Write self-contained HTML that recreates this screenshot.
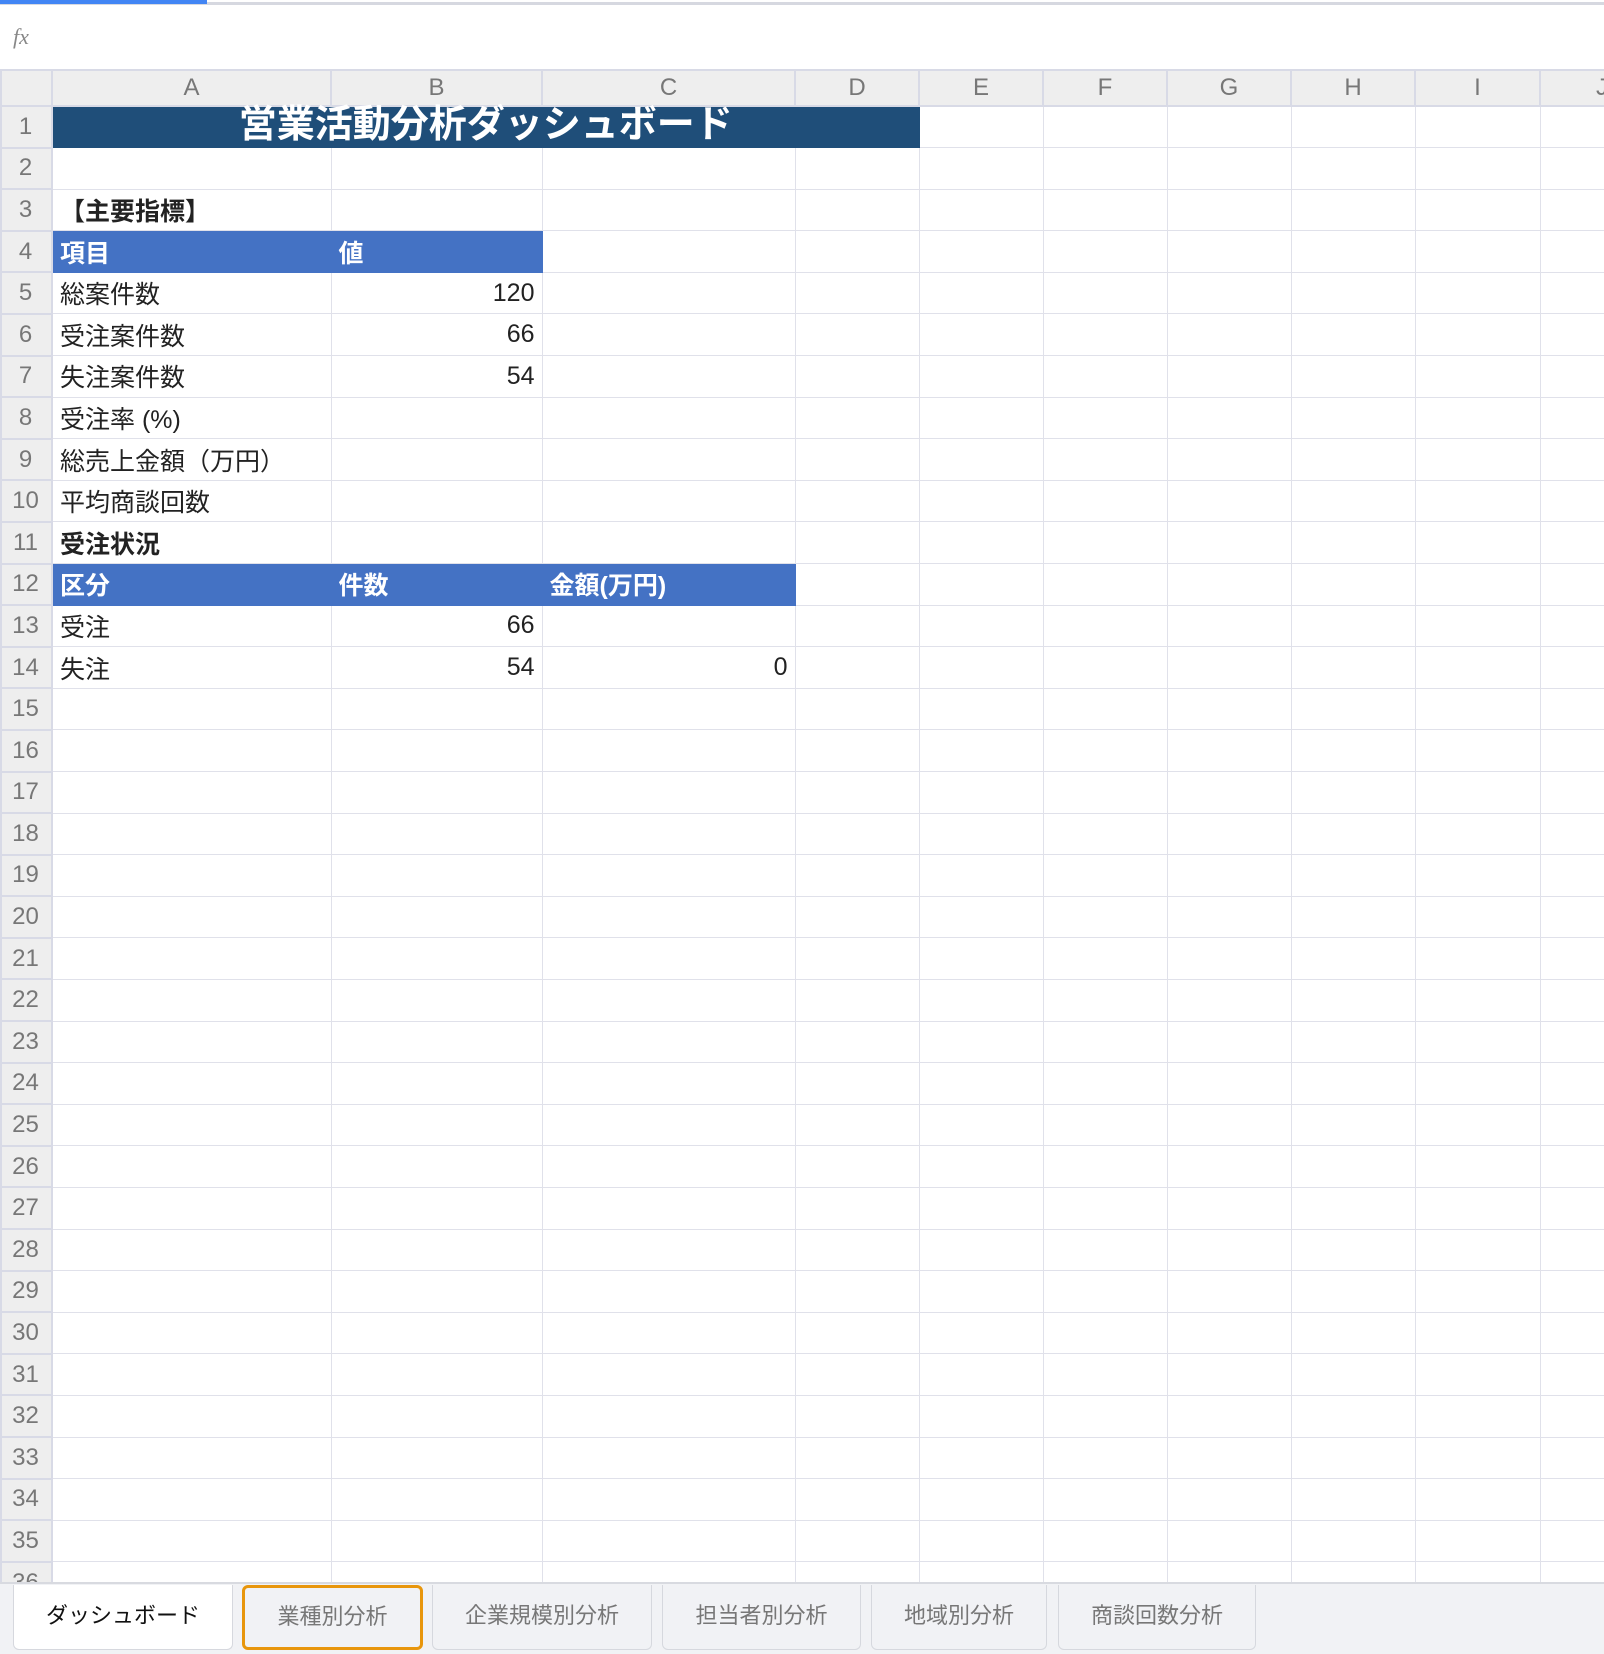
<!DOCTYPE html>
<html><head><meta charset="utf-8"><style>
*{margin:0;padding:0;box-sizing:border-box}
body{width:1604px;height:1654px;overflow:hidden;background:#fff;font-family:"Liberation Sans","Noto Sans CJK JP",sans-serif;position:relative}
.topbar{position:absolute;left:0;top:2px;width:1604px;height:3px;background:#d6d8e0}
.topblue{position:absolute;left:0;top:0;width:207px;height:4px;background:#4285f4}
.fx{position:absolute;left:13px;top:24px;font-family:"Liberation Serif",serif;font-style:italic;font-size:22px;color:#888}
.wrap{position:absolute;left:0;top:69px;width:1604px;height:1513px;overflow:hidden}
.grid{border-collapse:collapse;table-layout:fixed;width:1663px}
.grid td{border:1px solid #e0e1ea;height:41.6px;font-size:25px;color:#222;padding:0 7px;white-space:nowrap;overflow:visible}
.grid tr.h td{height:36px;background:#eeeeee;color:#777;text-align:center;border:2px solid #d8dae6;font-size:24px}
.grid td.rh{background:#eeeeee;color:#777;text-align:center;border:2px solid #d8dae6;border-top:1px solid #d8dae6;padding:0 2px 0 0;font-size:24px}
.r{text-align:right}
.b{font-weight:bold}
.hd{background:#4472c4;color:#fff!important;font-weight:bold;border-color:#4472c4!important}
.title{background:#1f4e79;color:#fff!important;font-size:38px!important;font-weight:bold;text-align:center;border-color:#1f4e79!important;line-height:36px;vertical-align:top;padding-top:0!important}
.tabs{position:absolute;left:0;top:1582px;width:1604px;height:72px;background:#f1f2f5;border-top:2px solid #d8dae0}
.tab{position:absolute;top:1px;height:65px;background:#f1f2f5;border:1px solid #d6d8de;border-top:none;border-radius:0 0 6px 6px;font-size:22px;color:#777;text-align:center;line-height:62px}
</style></head><body>
<div class="topbar"></div><div class="topblue"></div>
<div class="fx">fx</div>
<div class="wrap">
<table class="grid">
<colgroup><col style="width:51px"><col style="width:279px"><col style="width:211px"><col style="width:253px"><col style="width:124px"><col style="width:124px"><col style="width:124px"><col style="width:124px"><col style="width:124px"><col style="width:125px"><col style="width:124px"></colgroup>
<tr class="h"><td></td><td>A</td><td>B</td><td>C</td><td>D</td><td>E</td><td>F</td><td>G</td><td>H</td><td>I</td><td>J</td></tr>
<tr><td class="rh">1</td><td colspan="4" class="title">営業活動分析ダッシュボード</td><td></td><td></td><td></td><td></td><td></td><td></td></tr>
<tr><td class="rh">2</td><td></td><td></td><td></td><td></td><td></td><td></td><td></td><td></td><td></td><td></td></tr>
<tr><td class="rh">3</td><td class="b">【主要指標】</td><td></td><td></td><td></td><td></td><td></td><td></td><td></td><td></td><td></td></tr>
<tr><td class="rh">4</td><td class="hd">項目</td><td class="hd">値</td><td></td><td></td><td></td><td></td><td></td><td></td><td></td><td></td></tr>
<tr><td class="rh">5</td><td>総案件数</td><td class="r">120</td><td></td><td></td><td></td><td></td><td></td><td></td><td></td><td></td></tr>
<tr><td class="rh">6</td><td>受注案件数</td><td class="r">66</td><td></td><td></td><td></td><td></td><td></td><td></td><td></td><td></td></tr>
<tr><td class="rh">7</td><td>失注案件数</td><td class="r">54</td><td></td><td></td><td></td><td></td><td></td><td></td><td></td><td></td></tr>
<tr><td class="rh">8</td><td>受注率 (%)</td><td></td><td></td><td></td><td></td><td></td><td></td><td></td><td></td><td></td></tr>
<tr><td class="rh">9</td><td>総売上金額（万円）</td><td></td><td></td><td></td><td></td><td></td><td></td><td></td><td></td><td></td></tr>
<tr><td class="rh">10</td><td>平均商談回数</td><td></td><td></td><td></td><td></td><td></td><td></td><td></td><td></td><td></td></tr>
<tr><td class="rh">11</td><td class="b">受注状況</td><td></td><td></td><td></td><td></td><td></td><td></td><td></td><td></td><td></td></tr>
<tr><td class="rh">12</td><td class="hd">区分</td><td class="hd">件数</td><td class="hd">金額(万円)</td><td></td><td></td><td></td><td></td><td></td><td></td><td></td></tr>
<tr><td class="rh">13</td><td>受注</td><td class="r">66</td><td></td><td></td><td></td><td></td><td></td><td></td><td></td><td></td></tr>
<tr><td class="rh">14</td><td>失注</td><td class="r">54</td><td class="r">0</td><td></td><td></td><td></td><td></td><td></td><td></td><td></td></tr>
<tr><td class="rh">15</td><td></td><td></td><td></td><td></td><td></td><td></td><td></td><td></td><td></td><td></td></tr>
<tr><td class="rh">16</td><td></td><td></td><td></td><td></td><td></td><td></td><td></td><td></td><td></td><td></td></tr>
<tr><td class="rh">17</td><td></td><td></td><td></td><td></td><td></td><td></td><td></td><td></td><td></td><td></td></tr>
<tr><td class="rh">18</td><td></td><td></td><td></td><td></td><td></td><td></td><td></td><td></td><td></td><td></td></tr>
<tr><td class="rh">19</td><td></td><td></td><td></td><td></td><td></td><td></td><td></td><td></td><td></td><td></td></tr>
<tr><td class="rh">20</td><td></td><td></td><td></td><td></td><td></td><td></td><td></td><td></td><td></td><td></td></tr>
<tr><td class="rh">21</td><td></td><td></td><td></td><td></td><td></td><td></td><td></td><td></td><td></td><td></td></tr>
<tr><td class="rh">22</td><td></td><td></td><td></td><td></td><td></td><td></td><td></td><td></td><td></td><td></td></tr>
<tr><td class="rh">23</td><td></td><td></td><td></td><td></td><td></td><td></td><td></td><td></td><td></td><td></td></tr>
<tr><td class="rh">24</td><td></td><td></td><td></td><td></td><td></td><td></td><td></td><td></td><td></td><td></td></tr>
<tr><td class="rh">25</td><td></td><td></td><td></td><td></td><td></td><td></td><td></td><td></td><td></td><td></td></tr>
<tr><td class="rh">26</td><td></td><td></td><td></td><td></td><td></td><td></td><td></td><td></td><td></td><td></td></tr>
<tr><td class="rh">27</td><td></td><td></td><td></td><td></td><td></td><td></td><td></td><td></td><td></td><td></td></tr>
<tr><td class="rh">28</td><td></td><td></td><td></td><td></td><td></td><td></td><td></td><td></td><td></td><td></td></tr>
<tr><td class="rh">29</td><td></td><td></td><td></td><td></td><td></td><td></td><td></td><td></td><td></td><td></td></tr>
<tr><td class="rh">30</td><td></td><td></td><td></td><td></td><td></td><td></td><td></td><td></td><td></td><td></td></tr>
<tr><td class="rh">31</td><td></td><td></td><td></td><td></td><td></td><td></td><td></td><td></td><td></td><td></td></tr>
<tr><td class="rh">32</td><td></td><td></td><td></td><td></td><td></td><td></td><td></td><td></td><td></td><td></td></tr>
<tr><td class="rh">33</td><td></td><td></td><td></td><td></td><td></td><td></td><td></td><td></td><td></td><td></td></tr>
<tr><td class="rh">34</td><td></td><td></td><td></td><td></td><td></td><td></td><td></td><td></td><td></td><td></td></tr>
<tr><td class="rh">35</td><td></td><td></td><td></td><td></td><td></td><td></td><td></td><td></td><td></td><td></td></tr>
<tr><td class="rh">36</td><td></td><td></td><td></td><td></td><td></td><td></td><td></td><td></td><td></td><td></td></tr>
</table>
</div>
<div class="tabs">
<div class="tab" style="left:13px;width:220px;background:#fff;color:#111">ダッシュボード</div>
<div class="tab" style="left:242px;width:181px;border:3px solid #e8960c;border-radius:6px;top:1px;height:65px;line-height:58px">業種別分析</div>
<div class="tab" style="left:432px;width:220px">企業規模別分析</div>
<div class="tab" style="left:662px;width:199px">担当者別分析</div>
<div class="tab" style="left:871px;width:176px">地域別分析</div>
<div class="tab" style="left:1058px;width:198px">商談回数分析</div>
</div>
</body></html>
